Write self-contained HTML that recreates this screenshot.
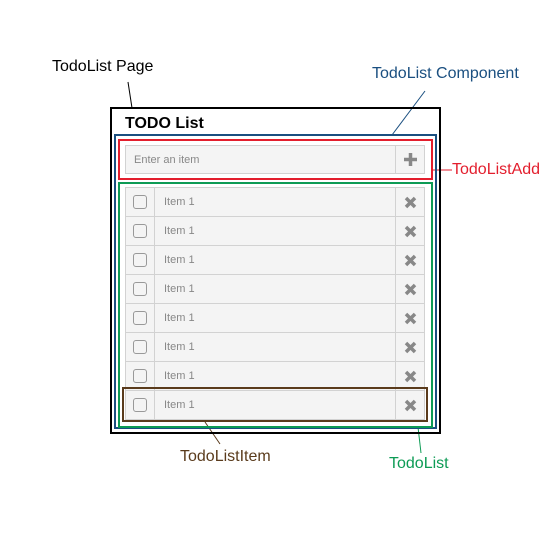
<!DOCTYPE html>
<html><head><meta charset="utf-8"><style>
*{margin:0;padding:0;box-sizing:border-box}
body{width:550px;height:550px;background:#fff;position:relative;font-family:"Liberation Sans",sans-serif;overflow:hidden}
.a{position:absolute}
.lbl{position:absolute;font-size:16px;white-space:nowrap;line-height:1}
.row{position:absolute;left:125px;width:300px;height:30px;border:1px solid #d2d2d2;background:#f4f4f4}
.row .cb{position:absolute;left:7px;top:7px;width:14px;height:14px;border:1.5px solid #999;border-radius:3px}
.row .d1{position:absolute;left:28px;top:0;bottom:0;border-left:1px solid #d2d2d2}
.row .d2{position:absolute;left:269px;top:0;bottom:0;border-left:1px solid #d2d2d2}
.row .t{position:absolute;left:38px;top:8px;font-size:11px;color:#888}
.row svg{position:absolute;left:278px;top:8px}
</style></head><body>
<svg class="a" style="left:0;top:0" width="550" height="550">
<line x1="128" y1="82" x2="132" y2="108" stroke="#000" stroke-width="1"/>
<line x1="425" y1="91" x2="392" y2="135" stroke="#1a4f80" stroke-width="1"/>
<line x1="432" y1="170" x2="452" y2="170" stroke="#e31e2d" stroke-width="1"/>
<line x1="205" y1="422" x2="220" y2="444" stroke="#5a3b1c" stroke-width="1"/>
<line x1="418" y1="427" x2="421" y2="453" stroke="#0d9b55" stroke-width="1"/>
</svg>
<div class="lbl" style="left:52px;top:59px;color:#000">TodoList Page</div>
<div class="lbl" style="left:372px;top:66px;color:#1a4f80">TodoList Component</div>
<div class="lbl" style="left:452px;top:162px;color:#e31e2d">TodoListAdd</div>
<div class="lbl" style="left:180px;top:449px;color:#5a3b1c">TodoListItem</div>
<div class="lbl" style="left:389px;top:456px;color:#0d9b55">TodoList</div>

<div class="a" style="left:110px;top:107px;width:331px;height:327px;border:2px solid #000"></div>
<div class="a" style="left:125px;top:115px;font-size:16px;font-weight:bold">TODO List</div>
<div class="a" style="left:114px;top:134px;width:323px;height:295px;border:2px solid #1a4f80"></div>
<div class="a" style="left:118px;top:139px;width:315px;height:41px;border:2px solid #e31e2d"></div>
<div class="a" style="left:125px;top:145px;width:300px;height:29px;border:1px solid #d2d2d2;background:#f4f4f4">
 <div class="a" style="left:8px;top:8px;font-size:11px;color:#888">Enter an item</div>
 <div class="a" style="left:269px;top:0;bottom:0;border-left:1px solid #d2d2d2"></div>
 <svg class="a" style="left:277px;top:6px" width="15" height="15"><path d="M7.5 1V14M1 7.5H14" stroke="#888" stroke-width="3.5"/></svg>
</div>
<div class="a" style="left:118px;top:182px;width:315px;height:246px;border:2px solid #0d9b55"></div>

<div class="row" style="top:187px"><div class="cb"></div><div class="d1"></div><div class="t">Item 1</div><div class="d2"></div><svg width="13" height="13"><path d="M2 2L11 11M11 2L2 11" stroke="#888" stroke-width="3.5"/></svg></div>
<div class="row" style="top:216px"><div class="cb"></div><div class="d1"></div><div class="t">Item 1</div><div class="d2"></div><svg width="13" height="13"><path d="M2 2L11 11M11 2L2 11" stroke="#888" stroke-width="3.5"/></svg></div>
<div class="row" style="top:245px"><div class="cb"></div><div class="d1"></div><div class="t">Item 1</div><div class="d2"></div><svg width="13" height="13"><path d="M2 2L11 11M11 2L2 11" stroke="#888" stroke-width="3.5"/></svg></div>
<div class="row" style="top:274px"><div class="cb"></div><div class="d1"></div><div class="t">Item 1</div><div class="d2"></div><svg width="13" height="13"><path d="M2 2L11 11M11 2L2 11" stroke="#888" stroke-width="3.5"/></svg></div>
<div class="row" style="top:303px"><div class="cb"></div><div class="d1"></div><div class="t">Item 1</div><div class="d2"></div><svg width="13" height="13"><path d="M2 2L11 11M11 2L2 11" stroke="#888" stroke-width="3.5"/></svg></div>
<div class="row" style="top:332px"><div class="cb"></div><div class="d1"></div><div class="t">Item 1</div><div class="d2"></div><svg width="13" height="13"><path d="M2 2L11 11M11 2L2 11" stroke="#888" stroke-width="3.5"/></svg></div>
<div class="row" style="top:361px"><div class="cb"></div><div class="d1"></div><div class="t">Item 1</div><div class="d2"></div><svg width="13" height="13"><path d="M2 2L11 11M11 2L2 11" stroke="#888" stroke-width="3.5"/></svg></div>
<div class="row" style="top:390px"><div class="cb"></div><div class="d1"></div><div class="t">Item 1</div><div class="d2"></div><svg width="13" height="13"><path d="M2 2L11 11M11 2L2 11" stroke="#888" stroke-width="3.5"/></svg></div>
<div class="a" style="left:122px;top:387px;width:306px;height:35px;border:2px solid #5a3b1c"></div>
</body></html>
